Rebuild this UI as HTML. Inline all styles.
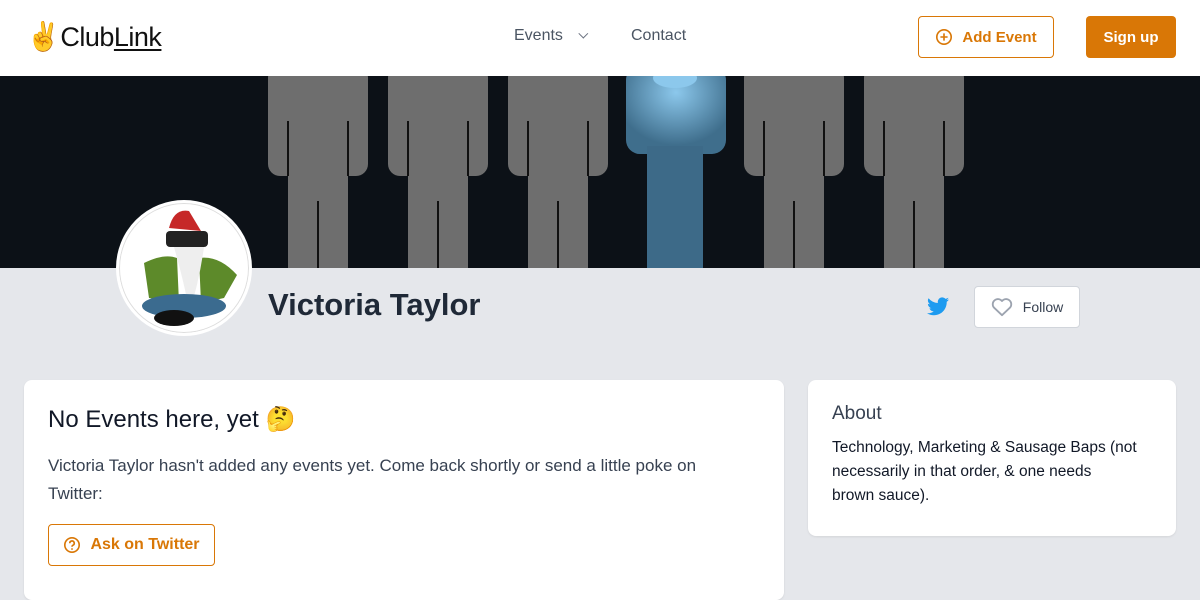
<!DOCTYPE html>
<html><head><meta charset="utf-8"><style>
*{box-sizing:border-box;margin:0;padding:0}
body{width:1200px;height:580px;overflow:hidden;background:#e5e7eb;font-family:"Liberation Sans","Noto Sans CJK JP",sans-serif;color:#111827;position:relative}
.nav{position:absolute;top:0;left:0;width:1200px;height:76px;background:#fff}
.logo{position:absolute;left:26px;top:20px;font-size:28px;color:#111;letter-spacing:-0.5px}
.logo u{text-decoration:underline;text-underline-offset:3px}
.navlink{position:absolute;top:27px;font-size:16px;color:#4b5563}
.btn{position:absolute;border-radius:4px;font-size:16px;font-weight:bold;display:flex;align-items:center;justify-content:center}
.banner{position:absolute;top:76px;left:0;width:1200px;height:192px;background:#0c1117}
.card{position:absolute;background:#fff;border-radius:8px;box-shadow:0 1px 2px rgba(0,0,0,.08)}
</style></head><body>
<div class="nav">
<div class="logo">✌<span style="font-size:27px">Club<u>Link</u></span></div>
<div class="navlink" style="left:514px">Events <span style="display:inline-block;margin-left:10px;width:7px;height:7px;border-right:1.5px solid #6b7280;border-bottom:1.5px solid #6b7280;transform:rotate(45deg) translateY(-4px)"></span></div>
<div class="navlink" style="left:631px">Contact</div>
<div class="btn" style="left:918px;top:16px;width:136px;height:42px;border:1px solid #d97706;color:#d97706;font-size:15px">
<svg width="18" height="18" viewBox="0 0 20 20" style="margin-right:9px"><circle cx="10" cy="10" r="8" fill="none" stroke="#d97706" stroke-width="1.8"/><path d="M10 6v8M6 10h8" stroke="#d97706" stroke-width="1.8"/></svg>Add Event</div>
<div class="btn" style="left:1086px;top:16px;width:90px;height:42px;background:#d97706;color:#fff;font-size:15px">Sign up</div>
</div>
<div class="banner">
<svg width="1200" height="192">
<defs><radialGradient id="b" cx="0.5" cy="0.3" r="0.6"><stop offset="0" stop-color="#8cc8ec"/><stop offset="1" stop-color="#3f6e8c"/></radialGradient></defs>
<g fill="#6e6e6e">
<g id="f"><rect x="268" y="-10" width="100" height="110" rx="12"/><rect x="288" y="60" width="60" height="140"/></g>
<use href="#f" x="120"/><use href="#f" x="240"/><use href="#f" x="476"/><use href="#f" x="596"/>
</g>
<g stroke="#111" stroke-width="2">
<path d="M288 45v55M348 45v55M318 125v70M408 45v55M468 45v55M438 125v70M528 45v55M588 45v55M558 125v70M764 45v55M824 45v55M794 125v70M884 45v55M944 45v55M914 125v70"/>
</g>
<rect x="626" y="-10" width="100" height="88" rx="14" fill="url(#b)"/>
<rect x="647" y="70" width="56" height="130" fill="#3d6a88"/>
<ellipse cx="675" cy="2" rx="22" ry="10" fill="#8cc8ec"/>
</svg>
</div>
<div style="position:absolute;left:116px;top:200px;width:136px;height:136px;border-radius:50%;background:#fff;border:3px solid #fff;box-shadow:0 0 0 1px #ddd inset">
<svg width="130" height="130" viewBox="0 0 130 130">
<path d="M50 25 Q55 5 70 8 L82 28 Z" fill="#c62828"/>
<rect x="47" y="28" width="42" height="16" rx="4" fill="#222"/>
<path d="M25 60 Q45 50 58 55 L60 100 L30 95 Z M80 55 Q100 52 118 72 L105 95 L82 100 Z" fill="#5d8a2a"/>
<path d="M55 44 Q68 90 70 110 Q80 80 85 44 Z" fill="#eee"/>
<ellipse cx="65" cy="103" rx="42" ry="12" fill="#3b6b8f"/>
<ellipse cx="55" cy="115" rx="20" ry="8" fill="#111"/>
</svg></div>
<div style="position:absolute;left:268px;top:287px;font-size:31px;font-weight:bold;color:#1f2937">Victoria Taylor</div>
<svg style="position:absolute;left:927px;top:297px" width="22" height="19" viewBox="0 0 24 20"><path d="M24 2.4c-.9.4-1.8.6-2.8.8 1-.6 1.8-1.6 2.2-2.7-1 .6-2 1-3.1 1.2A4.9 4.9 0 0 0 11.9 6.2 14 14 0 0 1 1.7 1 4.9 4.9 0 0 0 3.2 7.6c-.8 0-1.6-.3-2.2-.6 0 2.4 1.7 4.4 3.9 4.8-.7.2-1.5.2-2.2.1.6 2 2.4 3.4 4.6 3.4A9.9 9.9 0 0 1 0 17.3 14 14 0 0 0 7.5 19.5c9.1 0 14-7.5 14-14v-.6c1-.7 1.8-1.6 2.5-2.5z" fill="#1d9bf0"/></svg>
<div class="btn" style="left:974px;top:286px;width:106px;height:42px;background:#fff;border:1px solid #d1d5db;font-weight:normal;font-size:14px;color:#374151">
<svg width="22" height="20" viewBox="0 0 24 22" style="margin-right:10px"><path d="M12 20 3 11.5A5 5 0 0 1 12 4.5a5 5 0 0 1 9 7z" fill="none" stroke="#9ca3af" stroke-width="2" stroke-linejoin="round"/></svg>Follow</div>
<div class="card" style="left:24px;top:380px;width:760px;height:220px">
<div style="position:absolute;left:24px;top:25px;font-size:24px;color:#111827">No Events here, yet 🤔</div>
<div style="position:absolute;left:24px;top:72px;width:690px;font-size:17px;line-height:28px;color:#374151">Victoria Taylor hasn't added any events yet. Come back shortly or send a little poke on Twitter:</div>
<div class="btn" style="left:24px;top:144px;width:167px;height:42px;border:1px solid #d97706;color:#d97706;font-size:16px">
<svg width="18" height="18" viewBox="0 0 20 20" style="margin-right:9px"><circle cx="10" cy="10" r="8" fill="none" stroke="#d97706" stroke-width="1.8"/><path d="M7.5 8a2.5 2.5 0 1 1 3.5 2.3c-.7.3-1 .8-1 1.5V12" fill="none" stroke="#d97706" stroke-width="1.8"/><circle cx="10" cy="14.5" r="1" fill="#d97706"/></svg>Ask on Twitter</div>
</div>
<div class="card" style="left:808px;top:380px;width:368px;height:156px">
<div style="position:absolute;left:24px;top:23px;font-size:19px;color:#374151">About</div>
<div style="position:absolute;left:24px;top:56px;width:318px;font-size:15.5px;line-height:24px;color:#111827">Technology, Marketing &amp; Sausage Baps (not necessarily in that order, &amp; one needs<br>brown sauce).</div>
</div>
</body></html>
